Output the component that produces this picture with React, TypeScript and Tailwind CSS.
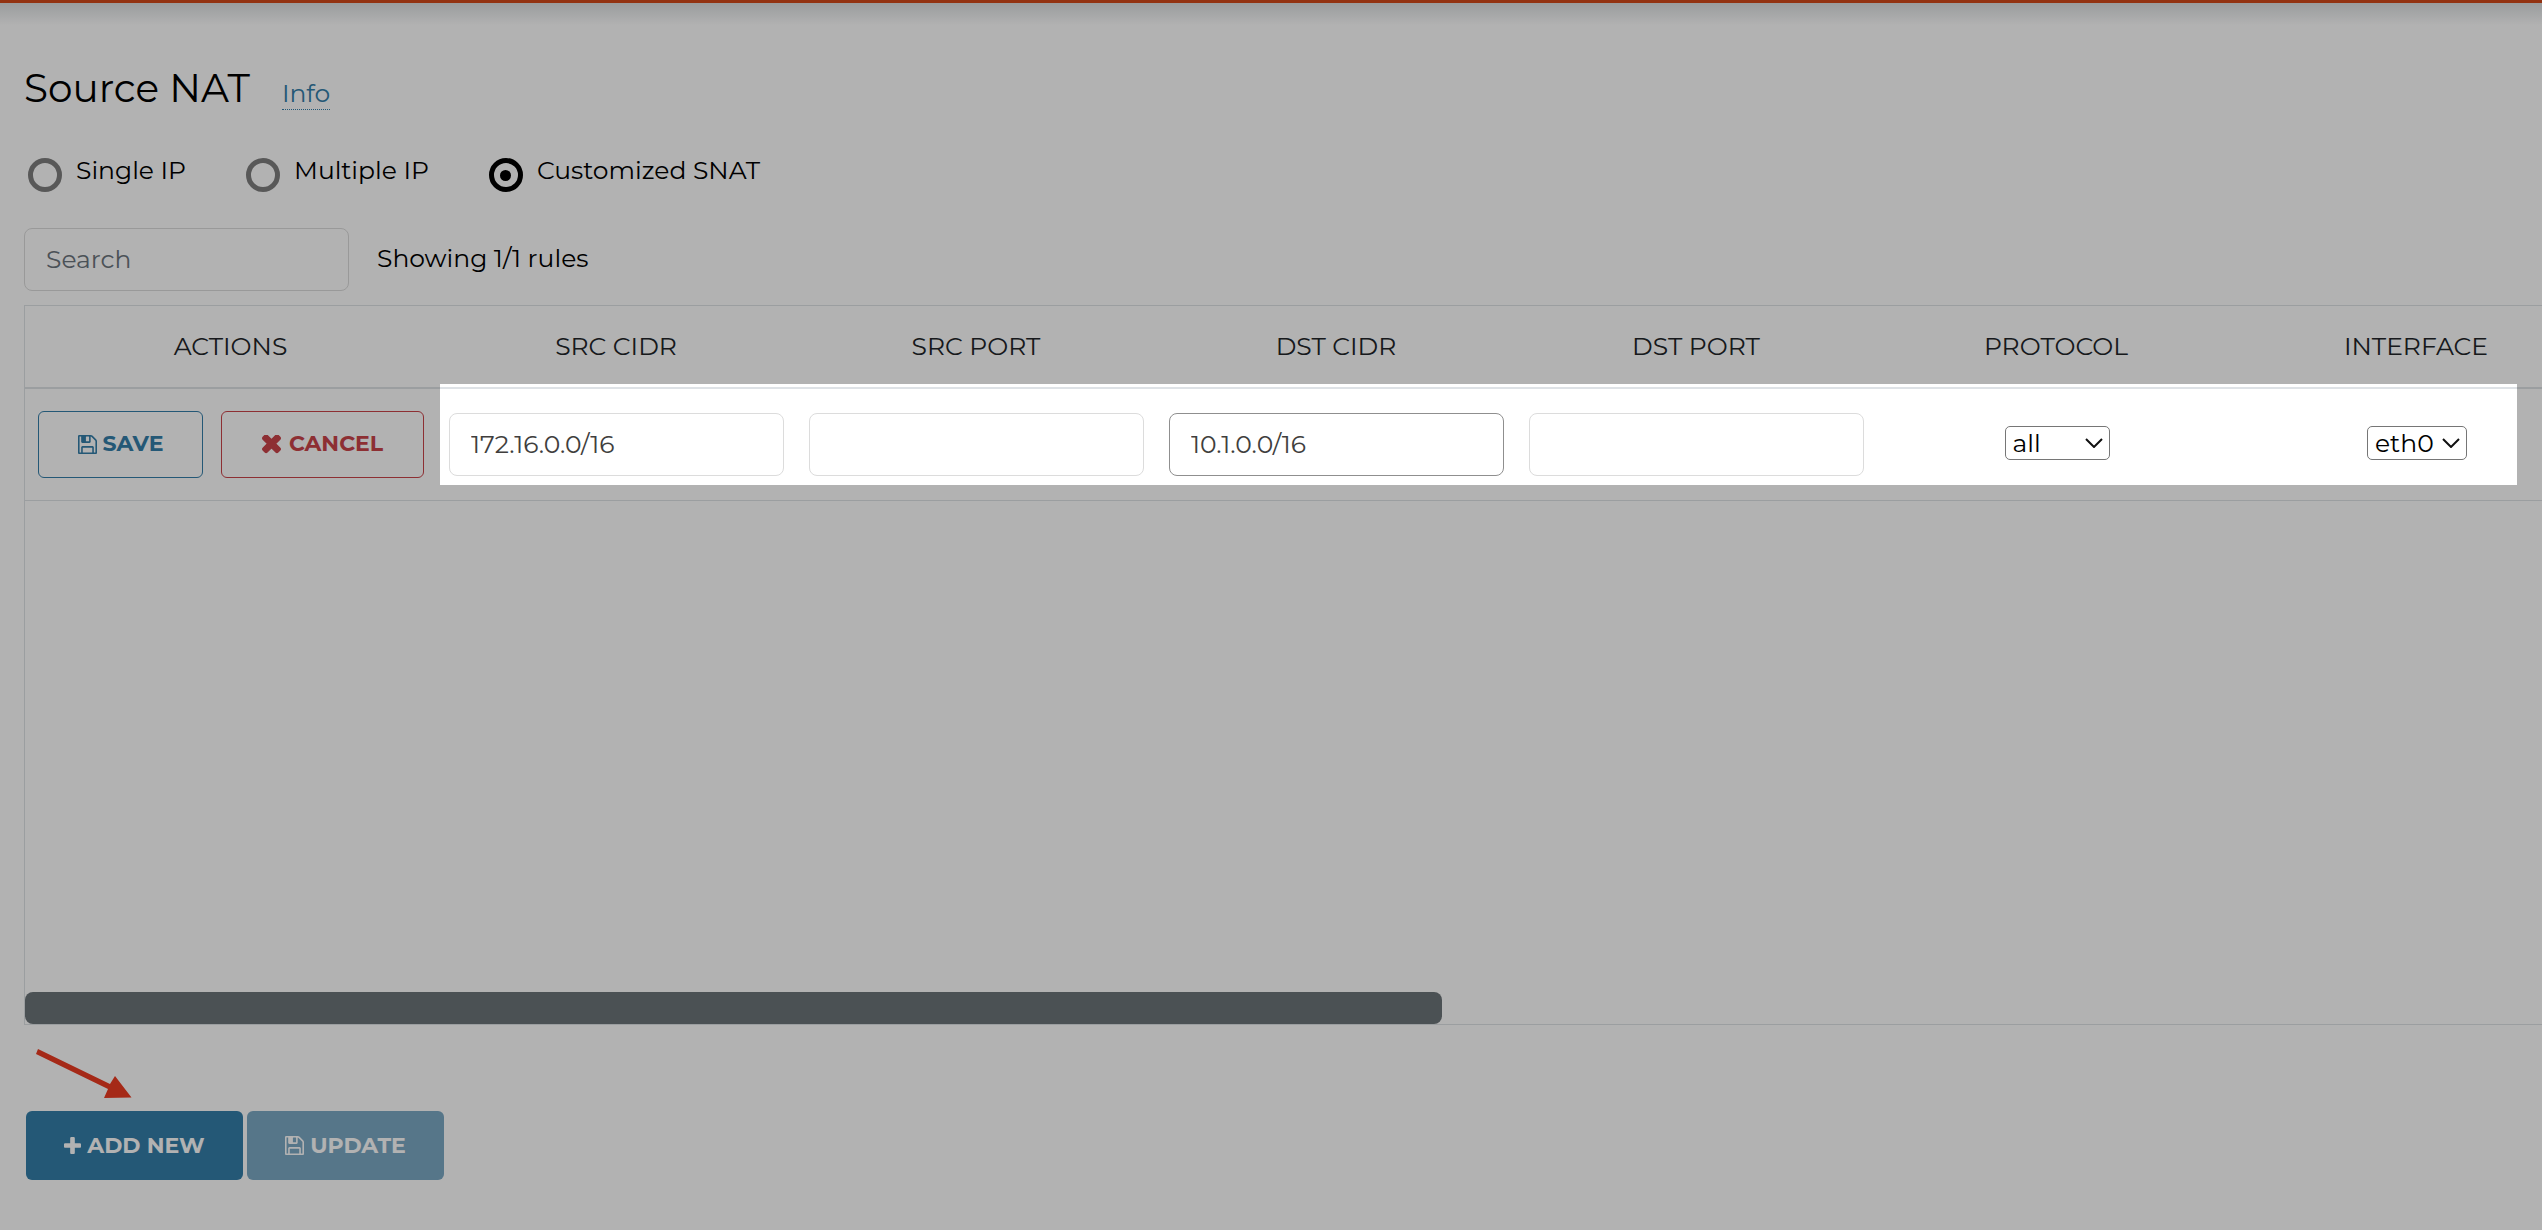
import React from "react";

function Glyph({ box, d, className, thick = 0 }: { box: string; d: string; className: string; thick?: number }) {
  return (
    <svg viewBox={box} className={className} fill="currentColor" stroke="currentColor" strokeWidth={thick} aria-hidden="true">
      <path d={d} />
    </svg>
  );
}

const FLOPPY =
  "M384 1536h768v-384h-768v384zM1280 1536h128v-896q0 -14 -10 -38.5t-20 -34.5l-281 -281q-10 -10 -34 -20t-39 -10v416q0 40 -28 68t-68 28h-576q-40 0 -68 -28t-28 -68v-416h-128v1280h128v-416q0 -40 28 -68t68 -28h832q40 0 68 28t28 68v416zM896 608v-320q0 -13 -9.5 -22.5t-22.5 -9.5h-192q-13 0 -22.5 9.5t-9.5 22.5v320q0 13 9.5 22.5t22.5 9.5h192q13 0 22.5 -9.5t9.5 -22.5zM1536 640v928q0 40 -28 68t-68 28h-1344q-40 0 -68 -28t-28 -68v-1344q0 -40 28 -68t68 -28h928q40 0 88 20t76 48l280 280q28 28 48 76t20 88z";
const TIMES =
  "M1298 1322q0 40-28 68l-136 136q-28 28-68 28t-68-28l-294-294-294 294q-28 28-68 28t-68-28l-136-136q-28-28-28-68t28-68l294-294-294-294q-28-28-28-68t28-68l136-136q28-28 68-28t68 28l294 294 294-294q28-28 68-28t68 28l136 136q28 28 28 68t-28 68l-294 294 294 294q28 28 28 68z";
const PLUS =
  "M1408 800v192q0 40-28 68t-68 28h-416v416q0 40-28 68t-68 28h-192q-40 0-68-28t-28-68v-416h-416q-40 0-68-28t-28-68v-192q0-40 28-68t68-28h416v-416q0-40 28-68t68-28h192q40 0 68 28t28 68v416h416q40 0 68 28t28 68z";

const Save = () => <Glyph box="0 128 1536 1536" d={FLOPPY} className="size-[19px]" />;

const MODES = ["Single IP", "Multiple IP", "Customized SNAT"];
const HEADINGS = ["ACTIONS", "SRC CIDR", "SRC PORT", "DST CIDR", "DST PORT", "PROTOCOL", "INTERFACE"];
const FIELDS = [
  { label: "Source CIDR", value: "172.16.0.0/16" },
  { label: "Source port", value: "" },
  { label: "Destination CIDR", value: "10.1.0.0/16", active: true },
  { label: "Destination port", value: "" },
];

function Picker({ label, options, className }: { label: string; options: string[]; className: string }) {
  return (
    <div className="relative inline-flex align-middle">
      <select
        aria-label={label}
        className={`h-[34px] appearance-none rounded-[5px] border border-[#767676] bg-white pl-[7px] leading-8 text-black ${className}`}
      >
        {options.map((o) => (
          <option key={o}>{o}</option>
        ))}
      </select>
      <svg viewBox="0 0 18 10" className="pointer-events-none absolute top-3 right-[7px] h-[10px] w-[18px]" fill="none" stroke="#111" strokeWidth="2" aria-hidden="true">
        <path d="M1 1l8 8 8-8" />
      </svg>
    </div>
  );
}

export default function App() {
  return (
    <div className="relative min-h-screen overflow-hidden bg-white font-['Montserrat','Inter',sans-serif] text-[25px] leading-8 text-black">
      <div className="h-[3px] bg-[#d3491b]" />
      <div className="h-[22px] bg-linear-to-b from-[#dde0e2] to-white" />

      <main className="pl-6">
        <header className="flex items-baseline gap-8 pt-[39px]">
          <h1 className="text-[39px] leading-12">Source NAT</h1>
          <a href="#info" className="border-b border-dotted border-[#347ea9] text-[#347ea9]">
            Info
          </a>
        </header>

        <fieldset className="mt-[42px] flex gap-[60px] pl-1">
          {MODES.map((m) => (
            <label key={m} className="flex items-start gap-3.5">
              <input
                type="radio"
                name="mode"
                defaultChecked={m === "Customized SNAT"}
                className="mt-1 flex size-[34px] appearance-none items-center justify-center rounded-full border-[5px] border-[#7f7f7f] before:size-[11px] before:rounded-full checked:border-black checked:before:bg-black"
              />
              {m}
            </label>
          ))}
        </fieldset>

        <div className="mt-9 flex items-center gap-7">
          <input
            type="text"
            aria-label="Search"
            placeholder="Search"
            className="h-[63px] w-[325px] rounded-lg border border-[#dcdcdc] px-[21px] pb-0.5 placeholder:text-[#6c757d]"
          />
          <span className="pb-1">Showing 1/1 rules</span>
        </div>

        <section className="mt-3.5 flex h-[720px] flex-col justify-between overflow-hidden border border-r-0 border-[#dee2e6]">
          <table className="w-[2571px] table-fixed border-collapse text-center">
            <colgroup>
              <col className="w-[411px]" />
              {HEADINGS.slice(1).map((h) => (
                <col key={h} className="w-[360px]" />
              ))}
            </colgroup>
            <thead>
              <tr className="h-[82px] border-b-2 border-[#dee2e6] text-[#212529]">
                {HEADINGS.map((h) => (
                  <th key={h} scope="col" className="pb-0.5 font-normal">
                    {h}
                  </th>
                ))}
              </tr>
            </thead>
            <tbody>
              <tr className="h-28 border-b border-[#dee2e6]">
                <td className="pl-[13px]">
                  <div className="flex gap-[18px] text-[22px] font-bold">
                    <button type="button" className="flex h-[67px] w-[165px] items-center justify-center gap-1.5 rounded-md border border-[#347ea9] text-[#347ea9]">
                      <Save />
                      SAVE
                    </button>
                    <button type="button" className="flex h-[67px] w-[203px] items-center justify-center gap-2 rounded-md border border-[#cb444a] text-[#cb444a]">
                      <Glyph box="70 380 1268 1268" d={TIMES} className="size-[19px]" thick={80} />
                      CANCEL
                    </button>
                  </div>
                </td>
                {FIELDS.map((f) => (
                  <td key={f.label} className="pr-3 pl-[13px]">
                    <input
                      type="text"
                      aria-label={f.label}
                      defaultValue={f.value}
                      className={`h-[63px] w-full rounded-lg border px-[21px] text-[#403e3d] ${f.active ? "border-[#8f8f8f]" : "border-[#dcdcdc]"}`}
                    />
                  </td>
                ))}
                <td className="pb-1 pl-0.5">
                  <Picker label="Protocol" options={["all", "tcp", "udp", "icmp"]} className="w-[105px]" />
                </td>
                <td className="pb-1 pl-0.5">
                  <Picker label="Interface" options={["eth0"]} className="w-[100px]" />
                </td>
              </tr>
            </tbody>
          </table>
          <div className="h-8 w-[56.3%] rounded-lg bg-[#6c7479]" />
        </section>

        <svg viewBox="0 0 96 50" className="mt-6 ml-3 block h-[50px] w-24" fill="#ed3b21" aria-hidden="true">
          <path d="M2 0L74 35L79 27L95.500 48.500L68 49L72 40L0 5Z" />
        </svg>

        <div className="mt-3 flex gap-1 pl-0.5 text-[22px] font-bold text-white">
          <button type="button" className="flex h-[69px] w-[217px] items-center justify-center gap-1.5 rounded-md bg-[#347ea9]">
            <Glyph box="0 192 1408 1408" d={PLUS} className="size-[17px]" />
            ADD NEW
          </button>
          <button type="button" disabled className="flex h-[69px] w-[197px] items-center justify-center gap-1.5 rounded-md bg-[#7ca9c5]">
            <Save />
            UPDATE
          </button>
        </div>
      </main>

      <div className="pointer-events-none absolute top-[384px] right-[25px] left-[440px] h-[101px] shadow-[0_0_0_3000px_rgba(0,0,0,0.3)]" />
    </div>
  );
}
